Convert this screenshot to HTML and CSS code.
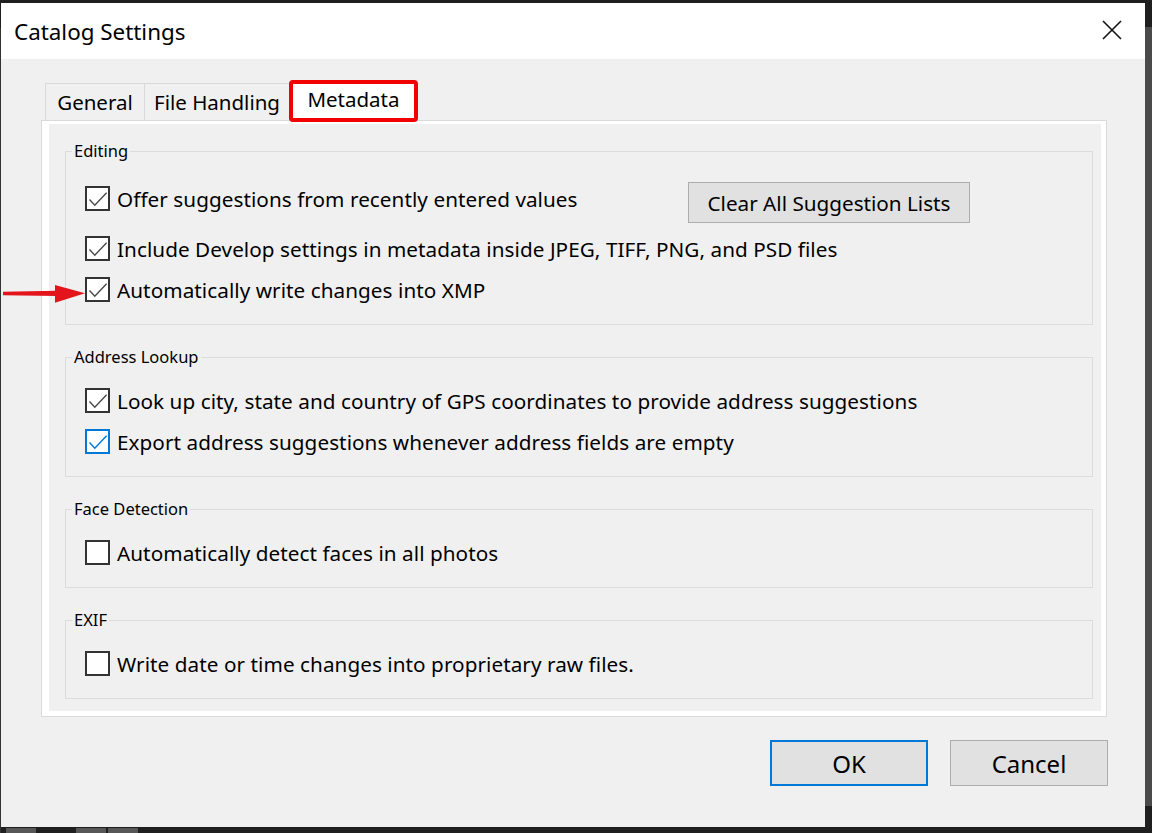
FILE: index.html
```html
<!DOCTYPE html>
<html>
<head>
<meta charset="utf-8">
<title>Catalog Settings</title>
<link rel="stylesheet" href="styles.css">
</head>
<body>
<div class="window">
  <div class="titlebar">
    <span class="title">Catalog Settings</span>
    <svg class="close" width="20" height="20" viewBox="0 0 20 20"><path d="M1 1L19 19M19 1L1 19" stroke="#111" stroke-width="1.6" fill="none"/></svg>
  </div>
  <div class="content">
    <div class="tabs">
      <div class="tab tab-general">General</div>
      <div class="tab tab-file">File Handling</div>
      <div class="tab tab-active">Metadata</div>
    </div>
    <div class="panel">
      <div class="panel-inner">
        <fieldset class="group">
          <legend>Editing</legend>
          <div class="row row-first">
            <label class="check"><span class="box"><svg width="21" height="21" viewBox="0 0 21 21"><path d="M2.5 11.5L7.8 17.2L19.6 4.8" stroke="#4a4a4a" stroke-width="1.4" fill="none"/></svg></span><span class="label">Offer suggestions from recently entered values</span></label>
            <button class="btn btn-clear">Clear All Suggestion Lists</button>
          </div>
          <div class="row row-second">
            <label class="check"><span class="box"><svg width="21" height="21" viewBox="0 0 21 21"><path d="M2.5 11.5L7.8 17.2L19.6 4.8" stroke="#4a4a4a" stroke-width="1.4" fill="none"/></svg></span><span class="label">Include Develop settings in metadata inside JPEG, TIFF, PNG, and PSD files</span></label>
          </div>
          <div class="row">
            <label class="check"><span class="box"><svg width="21" height="21" viewBox="0 0 21 21"><path d="M2.5 11.5L7.8 17.2L19.6 4.8" stroke="#4a4a4a" stroke-width="1.4" fill="none"/></svg></span><span class="label">Automatically write changes into XMP</span></label>
          </div>
        </fieldset>
        <fieldset class="group">
          <legend>Address Lookup</legend>
          <div class="row">
            <label class="check"><span class="box"><svg width="21" height="21" viewBox="0 0 21 21"><path d="M2.5 11.5L7.8 17.2L19.6 4.8" stroke="#4a4a4a" stroke-width="1.4" fill="none"/></svg></span><span class="label">Look up city, state and country of GPS coordinates to provide address suggestions</span></label>
          </div>
          <div class="row">
            <label class="check"><span class="box box-focus"><svg width="21" height="21" viewBox="0 0 21 21"><path d="M2.5 11.5L7.8 17.2L19.6 4.8" stroke="#0078d7" stroke-width="1.4" fill="none"/></svg></span><span class="label">Export address suggestions whenever address fields are empty</span></label>
          </div>
        </fieldset>
        <fieldset class="group">
          <legend>Face Detection</legend>
          <div class="row">
            <label class="check"><span class="box"></span><span class="label">Automatically detect faces in all photos</span></label>
          </div>
        </fieldset>
        <fieldset class="group group-last">
          <legend>EXIF</legend>
          <div class="row">
            <label class="check"><span class="box"></span><span class="label">Write date or time changes into proprietary raw files.</span></label>
          </div>
        </fieldset>
      </div>
    </div>
    <div class="footer">
      <button class="btn btn-ok">OK</button>
      <button class="btn btn-cancel">Cancel</button>
    </div>
  </div>
</div>
<svg class="arrow" width="90" height="30" viewBox="0 0 90 30"><path d="M3 11.8L57 10.8L57 15.9L3 15.2Z" fill="#e3141b"/><path d="M55 5L85 13.3L55 22.7Z" fill="#e3141b"/></svg>
</body>
</html>
```
FILE: styles.css
```css
html, body {
  margin: 0;
  padding: 0;
}
body {
  width: 1152px;
  height: 833px;
  overflow: hidden;
  position: relative;
  font-family: "Noto Sans", "Open Sans", sans-serif;
  color: #000;
  background:
    linear-gradient(#4a4a4a, #4a4a4a) right 0 top 27px / 7px 779px no-repeat,
    linear-gradient(#333333, #333333) left 0 top 28px / 1px 805px no-repeat,
    linear-gradient(#575757, #575757) left 6px bottom 0 / 30px 5px no-repeat,
    linear-gradient(#575757, #575757) left 76px bottom 0 / 30px 5px no-repeat,
    linear-gradient(#575757, #575757) left 108px bottom 0 / 30px 5px no-repeat,
    #1f1f1f;
}
.window {
  margin: 3px 0 0 1px;
  width: 1144px;
  height: 824px;
  background: #f0f0f0;
  display: flex;
  flex-direction: column;
}
.titlebar {
  height: 56px;
  flex: none;
  background: #fff;
  display: flex;
  align-items: center;
  justify-content: space-between;
  padding: 0 23px 0 13px;
}
.title {
  font-size: 22.4px;
}
.close {
  margin-bottom: 3px;
}
.content {
  padding: 21px 38px 0 40px;
}
.tabs {
  display: flex;
  align-items: flex-end;
  height: 40px;
  padding-left: 4px;
}
.tab {
  box-sizing: border-box;
  height: 37px;
  border: 1px solid #d9d9d9;
  border-bottom: none;
  display: flex;
  align-items: center;
  justify-content: center;
  font-size: 20.5px;
  padding-bottom: 1px;
}
.tab-general {
  width: 100px;
}
.tab-file {
  width: 145px;
  border-left: none;
}
.tab-active {
  width: 129px;
  height: 42px;
  margin-left: -1px;
  margin-bottom: -2px;
  border: 4px solid #f20000;
  border-radius: 4px;
  background: #fff;
  position: relative;
  z-index: 1;
  padding-bottom: 5px;
}
.panel {
  box-sizing: border-box;
  height: 597px;
  border: 1px solid #d9d9d9;
  background: #fff;
  padding: 3px 5px 5px 7px;
}
.panel-inner {
  box-sizing: border-box;
  height: 587px;
  background: #f0f0f0;
  padding: 17px 8px 12px 16px;
}
.group {
  margin: 0 0 22px 0;
  border: 1px solid #dcdcdc;
  padding: 21px 8px 22px 6px;
  min-width: 0;
}
.group-last {
  margin-bottom: 0;
}
.group legend {
  padding: 0 2px;
  font-size: 16.5px;
  line-height: 20px;
}
.row {
  display: flex;
  align-items: center;
  height: 25px;
  margin-left: 13px;
}
.row + .row {
  margin-top: 16px;
}
.row-first {
  height: 41px;
  align-items: flex-start;
}
.row-first .check {
  margin-top: 4px;
}
.row + .row-second {
  margin-top: 13px;
}
.check {
  display: flex;
  align-items: center;
  gap: 7px;
  height: 25px;
  font-size: 20.7px;
  letter-spacing: 0.06px;
}
.label {
  line-height: 25px;
  padding-top: 1px;
}
.box {
  box-sizing: border-box;
  flex: none;
  width: 25px;
  height: 25px;
  border: 2px solid #333;
  background: #fff;
  display: flex;
}
.box-focus {
  border-color: #0078d7;
}
.btn {
  font-family: inherit;
  color: #000;
  background: #e1e1e1;
  border: 1px solid #adadad;
  padding: 0;
  box-sizing: border-box;
}
.btn-clear {
  width: 282px;
  height: 41px;
  margin-left: auto;
  margin-right: 114px;
  font-size: 20.7px;
}
.footer {
  display: flex;
  justify-content: flex-end;
  gap: 22px;
  margin-top: 23px;
  margin-right: -1px;
}
.btn-ok, .btn-cancel {
  width: 158px;
  height: 46px;
  font-size: 24px;
}
.btn-ok {
  border: 2px solid #0078d7;
}
.arrow {
  position: absolute;
  left: 0;
  top: 280px;
}
```
